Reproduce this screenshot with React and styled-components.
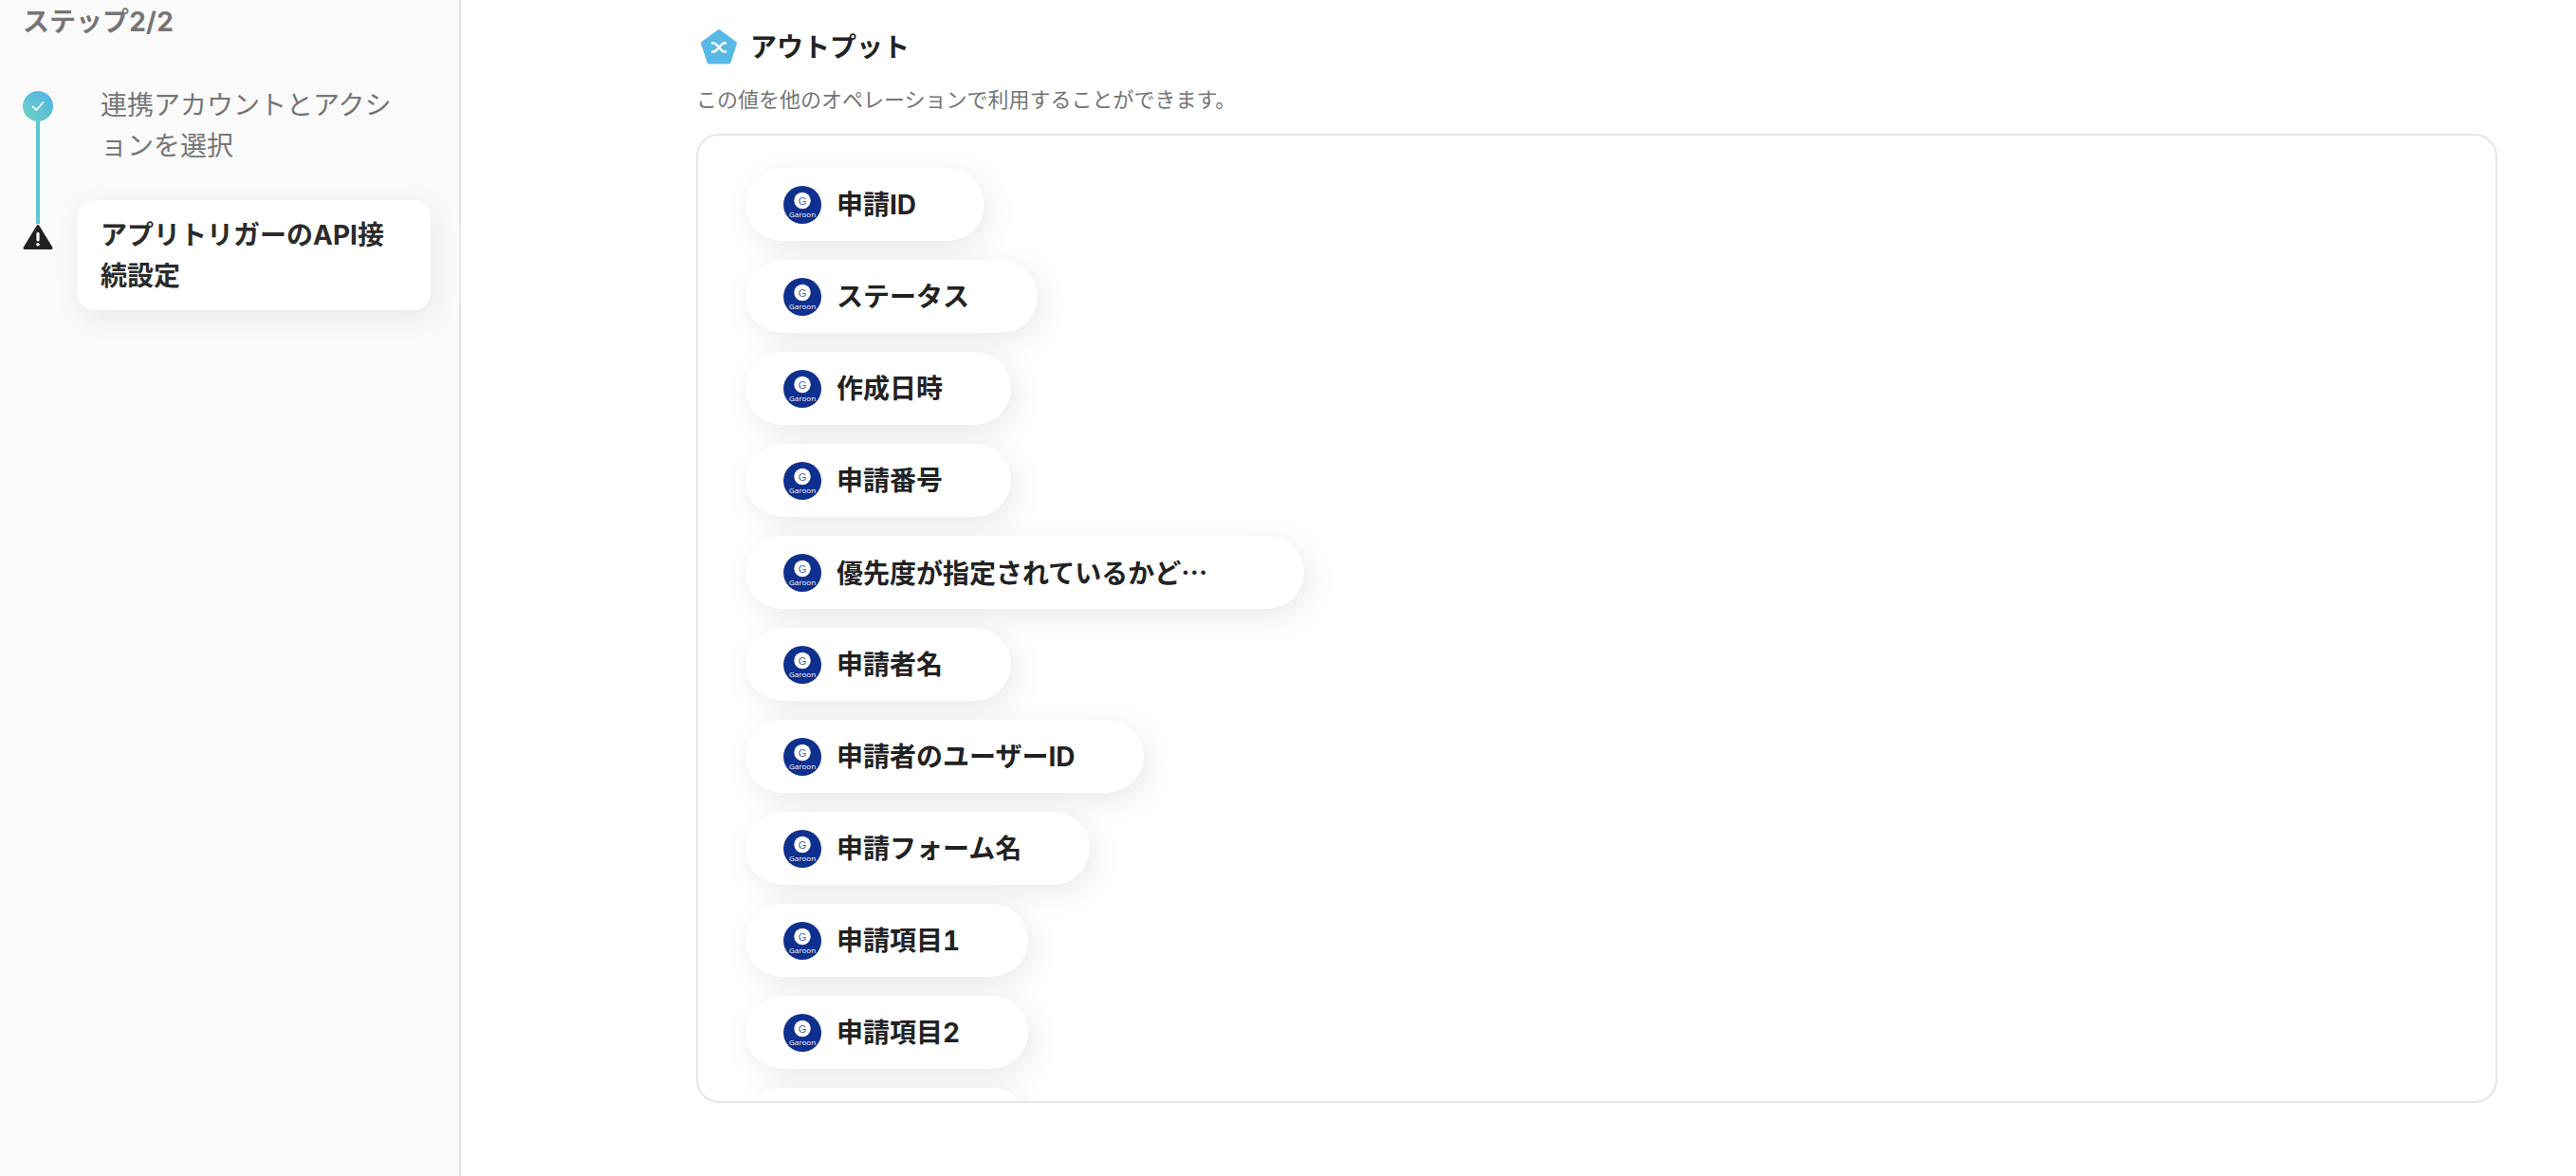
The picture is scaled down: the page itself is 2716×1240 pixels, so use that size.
import React from "react";
import styled, { createGlobalStyle } from "styled-components";

const outputs = [
  { label: "申請ID" },
  { label: "ステータス" },
  { label: "作成日時" },
  { label: "申請番号" },
  { label: "優先度が指定されているかど", cut: true },
  { label: "申請者名" },
  { label: "申請者のユーザーID" },
  { label: "申請フォーム名" },
  { label: "申請項目1" },
  { label: "申請項目2" },
  { label: "申請項目3" },
];

const GaroonIcon = () => (
  <IconSvg viewBox="0 0 40 40">
    <circle cx="20" cy="20" r="20" fill="#10308f" />
    <circle cx="20" cy="15.5" r="8.7" fill="#fff" />
    <text x="20" y="19.5" textAnchor="middle" fontSize="11" fill="#4a62b0" fontFamily="Liberation Sans, sans-serif">G</text>
    <text x="20" y="33" textAnchor="middle" fontSize="8" fill="#fff" fontFamily="Open Sans, sans-serif">Garoon</text>
  </IconSvg>
);

const App = () => {
  return (
    <Page>
      <GlobalStyle />
      <Sidebar>
        <SideTitle>ステップ2/2</SideTitle>
        <Steps>
          <Markers>
            <DoneMark>
              <svg width="16" height="16" viewBox="0 0 16 16" fill="none">
                <path d="M2.5 8.5L6.3 12L13.5 4" stroke="#fff" strokeWidth="1.8" strokeLinecap="round" strokeLinejoin="round" />
              </svg>
            </DoneMark>
            <Connector />
            <svg width="32" height="28" viewBox="0 0 32 28">
              <path d="M16 2.5L30 25.5H2Z" fill="#222" stroke="#222" strokeWidth="3" strokeLinejoin="round" />
              <rect x="14.4" y="9" width="3.2" height="9.5" rx="1.4" fill="#fff" />
              <circle cx="16" cy="21.8" r="1.8" fill="#fff" />
            </svg>
          </Markers>
          <StepList>
            <StepItem>連携アカウントとアクションを選択</StepItem>
            <StepItem $active>アプリトリガーのAPI接続設定</StepItem>
          </StepList>
        </Steps>
      </Sidebar>
      <Main>
        <TitleRow>
          <svg width="40" height="40" viewBox="0 0 40 40">
            <path d="M20 3L37 15.5L30.5 35.5H9.5L3 15.5Z" fill="#58b8e6" stroke="#58b8e6" strokeWidth="4" strokeLinejoin="round" />
            <path d="M13 15.5H14.5C18 15.5 22 24.5 25.5 24.5H27M27 15.5H25.5C22 15.5 18 24.5 14.5 24.5H13" stroke="#fff" strokeWidth="2.6" fill="none" strokeLinecap="round" />
          </svg>
          <Title>アウトプット</Title>
        </TitleRow>
        <Description>この値を他のオペレーションで利用することができます。</Description>
        <OutputBox>
          {outputs.map((item) => (
            <Pill key={item.label}>
              <GaroonIcon />
              <PillLabel $cut={item.cut}>
                {item.label}
                {item.cut && <Ellipsis>…</Ellipsis>}
              </PillLabel>
            </Pill>
          ))}
        </OutputBox>
      </Main>
    </Page>
  );
};
export default App;

const GlobalStyle = createGlobalStyle`
  html, body {
    margin: 0;
    padding: 0;
    background: #fff;
  }
  * {
    box-sizing: border-box;
  }
`;

const Page = styled.div`
  display: flex;
  width: 2716px;
  height: 1240px;
  overflow: hidden;
  background: #fff;
  font-family: "Inter", "Noto Sans CJK JP", sans-serif;
  font-variant-numeric: tabular-nums;
`;

const Sidebar = styled.aside`
  flex: 0 0 486px;
  padding-left: 24px;
  background: #fafafa;
  border-right: 2px solid #e6e6e6;
`;

const SideTitle = styled.h2`
  margin: 2px 0 0;
  font-size: 28px;
  line-height: 43px;
  font-weight: 700;
  color: #757575;
`;

const Steps = styled.div`
  display: flex;
  gap: 26px;
  margin-top: 27px;
`;

const Markers = styled.div`
  display: flex;
  flex-direction: column;
  align-items: center;
  flex: 0 0 32px;
  padding-top: 24px;
`;

const DoneMark = styled.div`
  display: flex;
  align-items: center;
  justify-content: center;
  width: 32px;
  height: 32px;
  border-radius: 50%;
  background: linear-gradient(45deg, #70d4bd, #4eb0ec);
`;

const Connector = styled.div`
  width: 4px;
  height: 108px;
  background: #5ec6d3;
`;

const StepList = styled.div`
  display: flex;
  flex-direction: column;
  gap: 21px;
  width: 372px;
  padding-top: 2px;
`;

const StepItem = styled.div`
  padding: 16px 36px 14px 24px;
  border-radius: 18px;
  font-size: 28px;
  line-height: 43px;
  line-break: anywhere;
  font-weight: ${(p) => (p.$active ? 700 : 400)};
  color: ${(p) => (p.$active ? "#2b2b2b" : "#757575")};
  background: ${(p) => (p.$active ? "#fff" : "transparent")};
  box-shadow: ${(p) => (p.$active ? "4px 8px 32px rgba(0, 0, 0, 0.08)" : "none")};
`;

const Main = styled.main`
  flex: 1;
  padding: 30px 83px 0 248px;
`;

const TitleRow = styled.div`
  display: flex;
  align-items: center;
  gap: 13px;
  padding-left: 4px;
`;

const Title = styled.h1`
  margin: 0;
  font-size: 28px;
  line-height: 38px;
  font-weight: 700;
  color: #222;
`;

const Description = styled.p`
  margin: 19px 0 0;
  font-size: 22px;
  line-height: 32px;
  color: #757575;
`;

const OutputBox = styled.div`
  display: flex;
  flex-direction: column;
  align-items: flex-start;
  gap: 20px;
  height: 1022px;
  margin-top: 20px;
  padding: 34px 0 0 50px;
  overflow: hidden;
  border: 2px solid #e6e6e6;
  border-radius: 24px;
`;

const Pill = styled.div`
  display: flex;
  flex: none;
  align-items: center;
  gap: 16px;
  height: 77px;
  padding: 0 72px 0 40px;
  border-radius: 39px;
  background: #fff;
  box-shadow: 6px 8px 32px rgba(0, 0, 0, 0.09);
`;

const IconSvg = styled.svg`
  flex: none;
  width: 40px;
  height: 40px;
`;

const PillLabel = styled.span`
  font-size: 28px;
  line-height: 40px;
  font-weight: 700;
  white-space: nowrap;
  color: #222;
  margin-right: ${(p) => (p.$cut ? "30px" : "0")};
`;

const Ellipsis = styled.span`
  font-family: "Noto Sans CJK JP", sans-serif;
`;
